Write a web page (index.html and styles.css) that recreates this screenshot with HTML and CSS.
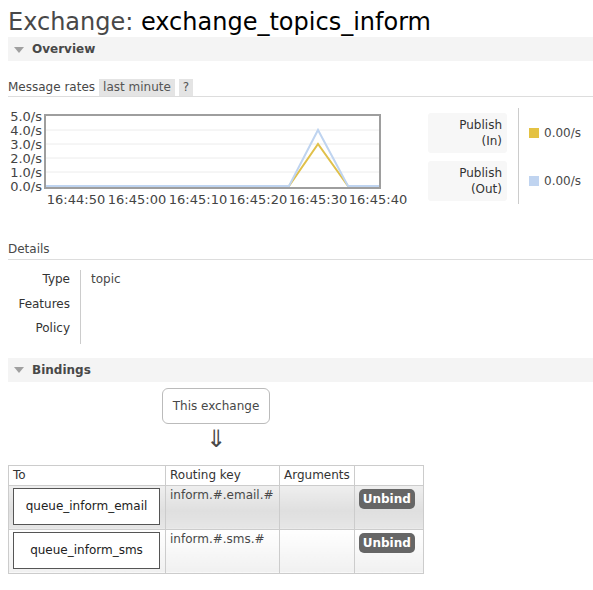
FILE: index.html
```html
<!DOCTYPE html>
<html>
<head>
<meta charset="utf-8">
<link rel="stylesheet" href="styles.css">
</head>
<body>
<h1 class="title">Exchange: <b>exchange_topics_inform</b></h1>

<div class="section-h"><span class="tri"></span>Overview</div>

<div class="rates-head">
  <span>Message rates</span>
  <span class="pill">last minute</span>
  <span class="pill">?</span>
</div>

<div class="chart-row">
  <svg class="chart" width="412" height="102" viewBox="0 0 412 102">
    <g class="grid">
      <line x1="37" y1="22" x2="372" y2="22"/>
      <line x1="37" y1="36" x2="372" y2="36"/>
      <line x1="37" y1="50" x2="372" y2="50"/>
      <line x1="37" y1="64" x2="372" y2="64"/>
    </g>
    <polyline class="ln-in" points="37,78 281,78 310,36 340,78 372,78"/>
    <polyline class="ln-out" points="37,78 281,78 310,22 340,78 372,78"/>
    <rect class="frame" x="37" y="7" width="335" height="73"/>
    <g class="ylab">
      <text x="34" y="13">5.0/s</text>
      <text x="34" y="27">4.0/s</text>
      <text x="34" y="41">3.0/s</text>
      <text x="34" y="55">2.0/s</text>
      <text x="34" y="69">1.0/s</text>
      <text x="34" y="83">0.0/s</text>
    </g>
    <g class="xlab">
      <text x="68" y="96">16:44:50</text>
      <text x="129" y="96">16:45:00</text>
      <text x="190" y="96">16:45:10</text>
      <text x="250" y="96">16:45:20</text>
      <text x="310" y="96">16:45:30</text>
      <text x="370" y="96">16:45:40</text>
    </g>
  </svg>
  <div class="legend">
    <div class="legend-keys">
      <div class="key">Publish<br>(In)</div>
      <div class="key">Publish<br>(Out)</div>
    </div>
    <div class="legend-vals">
      <div class="val"><span class="sw sw-in"></span>0.00/s</div>
      <div class="val"><span class="sw sw-out"></span>0.00/s</div>
    </div>
  </div>
</div>

<div class="sub-h">Details</div>
<table class="facts">
  <tr><th>Type</th><td>topic</td></tr>
  <tr><th>Features</th><td></td></tr>
  <tr><th>Policy</th><td></td></tr>
</table>

<div class="section-h bindings-h"><span class="tri"></span>Bindings</div>

<div class="bindings">
  <div class="diagram">
    <div class="this-ex">This exchange</div>
    <div class="arrow">⇓</div>
  </div>
  <table class="list">
    <thead>
      <tr><th class="c-to">To</th><th class="c-rk">Routing key</th><th class="c-args">Arguments</th><th class="c-act"></th></tr>
    </thead>
    <tbody>
      <tr class="alt1">
        <td><div class="queue">queue_inform_email</div></td>
        <td>inform.#.email.#</td>
        <td></td>
        <td><span class="btn">Unbind</span></td>
      </tr>
      <tr class="alt2">
        <td><div class="queue">queue_inform_sms</div></td>
        <td>inform.#.sms.#</td>
        <td></td>
        <td><span class="btn">Unbind</span></td>
      </tr>
    </tbody>
  </table>
</div>
</body>
</html>
```
FILE: styles.css
```css
html, body {
  background: #fff;
}
body {
  margin: 0;
  padding: 0 0 0 8px;
  font-family: "DejaVu Sans", Verdana, sans-serif;
  font-size: 12px;
  color: #484848;
}
.title {
  margin: 0;
  padding-top: 8px;
  height: 29px;
  font-size: 24px;
  line-height: 28px;
  font-weight: normal;
  color: #484848;
  white-space: nowrap;
}
.title b {
  font-weight: normal;
  color: #000;
}
.section-h {
  height: 24px;
  line-height: 24px;
  background: #f4f4f4;
  font-weight: bold;
  color: #484848;
  display: flex;
  align-items: center;
}
.tri {
  width: 0;
  height: 0;
  border-left: 5px solid transparent;
  border-right: 5px solid transparent;
  border-top: 6px solid #a0a0a0;
  margin: 1px 8px 0 6px;
}
.rates-head {
  margin-top: 17px;
  border-bottom: 1px solid #ddd;
  display: flex;
  align-items: center;
  height: 18px;
  line-height: 17px;
}
.rates-head .pill {
  background: #e4e4e4;
  padding: 0 4px;
  margin-left: 4px;
  height: 17px;
  color: #555;
}
.chart-row {
  display: flex;
  align-items: flex-start;
  margin-top: 11px;
}
.chart {
  display: block;
}
.chart .grid line {
  stroke: #ececec;
  stroke-width: 1;
}
.chart .frame {
  fill: none;
  stroke: #9e9e9e;
  stroke-width: 2;
}
.chart polyline {
  fill: none;
  stroke-width: 2;
  stroke-linejoin: miter;
}
.ln-in { stroke: #e0c04a; }
.ln-out { stroke: #bfd4f0; }
.chart text {
  font-family: "DejaVu Sans", Verdana, sans-serif;
  font-size: 13px;
  fill: #444;
}
.ylab text { text-anchor: end; }
.xlab text { text-anchor: middle; }
.legend {
  display: flex;
  margin-left: 8px;
}
.legend-keys {
  width: 79px;
  padding-top: 5px;
  margin-right: 11px;
  display: flex;
  flex-direction: column;
  gap: 8px;
}
.key {
  height: 40px;
  box-sizing: border-box;
  padding: 4px 5px 4px 0;
  line-height: 16px;
  text-align: right;
  background: #f7f7f7;
  border-radius: 3px;
  color: #333;
}
.legend-vals {
  border-left: 1px solid #ccc;
  padding: 5px 0 3px 10px;
  display: flex;
  flex-direction: column;
  gap: 8px;
}
.val {
  height: 40px;
  display: flex;
  align-items: center;
}
.sw {
  width: 10px;
  height: 10px;
  margin-right: 5px;
}
.sw-in { background: #e4c243; }
.sw-out { background: #c0d4f0; }
.sub-h {
  margin-top: 32px;
  padding-bottom: 2px;
  line-height: 15px;
  border-bottom: 1px solid #ddd;
}
.facts {
  margin-top: 10px;
  border-collapse: collapse;
}
.facts th, .facts td {
  padding: 2px 10px 8px 10px;
  line-height: 14.5px;
  vertical-align: top;
  font-weight: normal;
}
.facts th {
  width: 52px;
  text-align: right;
  border-right: 1px solid #ccc;
  color: #333;
}
.facts td {
  text-align: left;
}
.bindings-h {
  margin-top: 14px;
}
.bindings {
  width: 416px;
}
.diagram {
  display: flex;
  flex-direction: column;
  align-items: center;
  margin-top: 6px;
}
.this-ex {
  width: 108px;
  height: 36px;
  box-sizing: border-box;
  border: 1px solid #bbb;
  border-radius: 6px;
  display: flex;
  align-items: center;
  justify-content: center;
  color: #484848;
}
.arrow {
  font-size: 24px;
  line-height: 30px;
  height: 41px;
  color: #484848;
}
.list {
  border-collapse: collapse;
  width: 416px;
}
.list th, .list td {
  border: 1px solid #ccc;
  text-align: left;
  vertical-align: top;
  font-weight: normal;
  padding: 2px 4px;
  line-height: 15px;
}
.list th {
  height: 15px;
  color: #333;
}
.list td {
  height: 38px;
  padding: 2px 4px 3px 4px;
}
.c-to { width: 148px; }
.c-rk { width: 105px; }
.c-args { width: 65px; }
.list tr.alt1 td {
  background: linear-gradient(to bottom, #efefef 0%, #dfdfdf 60%, #e6e6e6 100%);
}
.list tr.alt2 td {
  background: linear-gradient(to bottom, #ffffff 0%, #f0f0f0 100%);
}
.queue {
  width: 147px;
  height: 37px;
  box-sizing: border-box;
  border: 1px solid #555;
  background: #fff;
  color: #222;
  display: flex;
  align-items: center;
  justify-content: center;
}
.btn {
  display: inline-block;
  width: 56px;
  height: 20px;
  line-height: 20px;
  margin-top: 1px;
  text-align: center;
  background: #666;
  color: #fff;
  font-weight: bold;
  border-radius: 5px;
}
```
